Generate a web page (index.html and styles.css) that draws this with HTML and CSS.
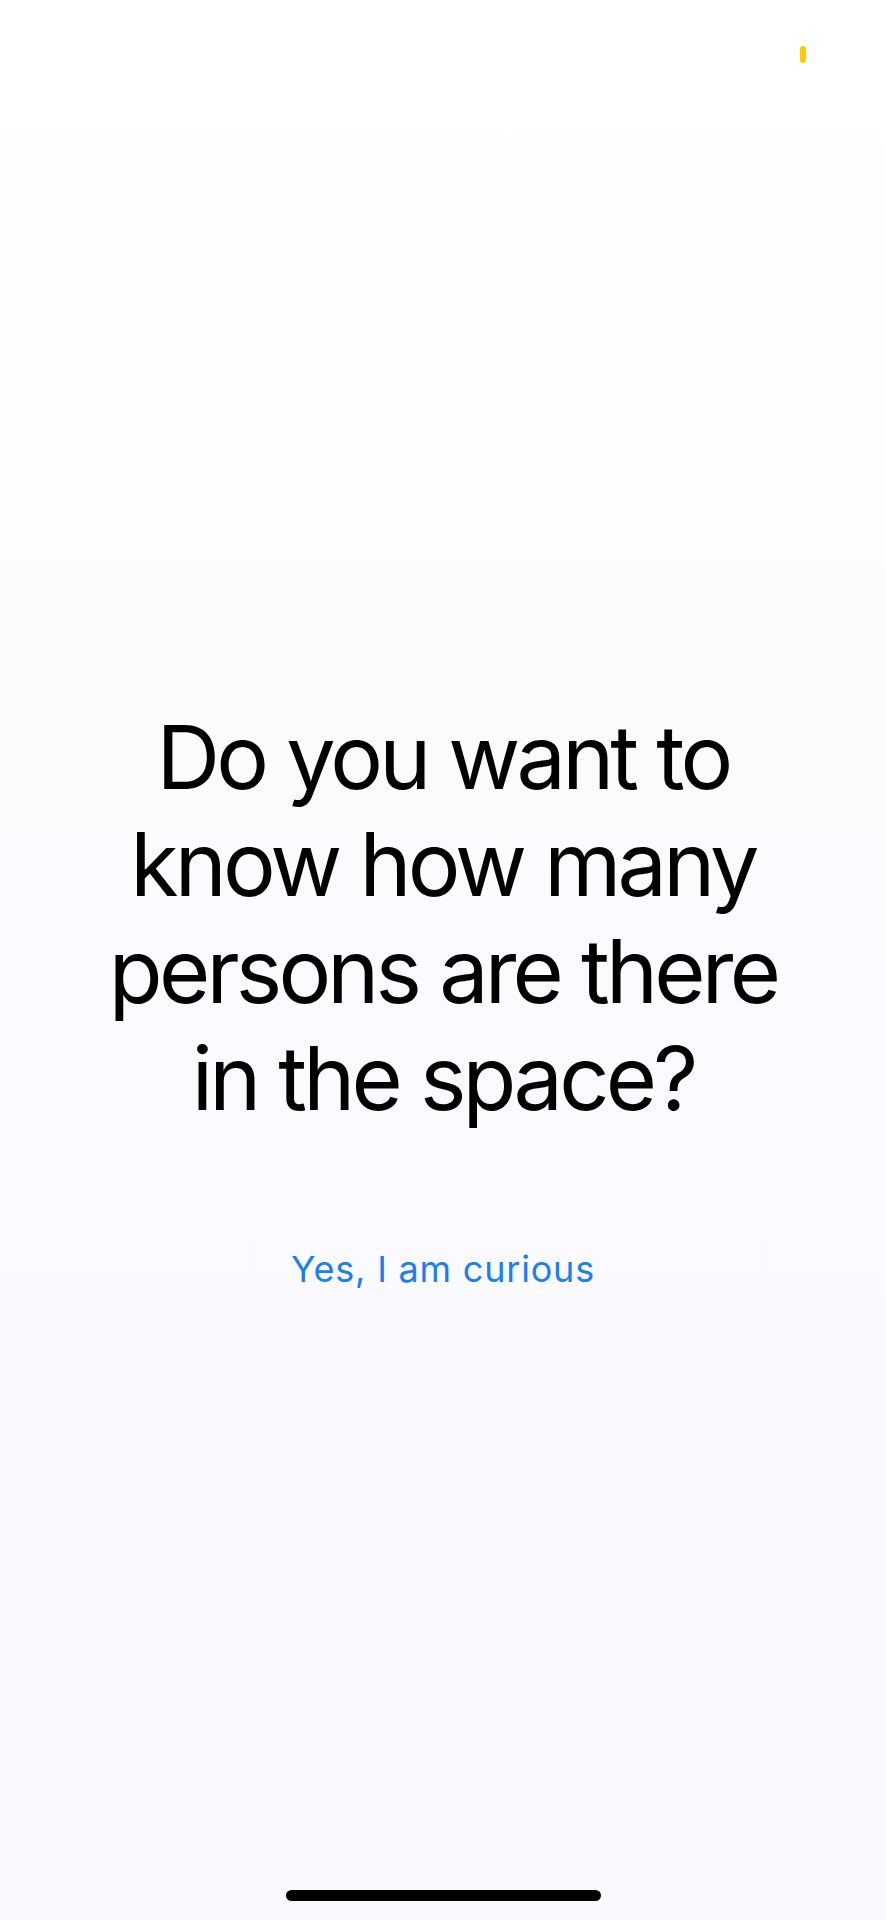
FILE: index.html
```html
<!DOCTYPE html>
<html lang="en">
<head>
<meta charset="utf-8">
<title>Curious</title>
<link rel="stylesheet" href="styles.css">
</head>
<body>
<div class="screen">
  <div class="status-bar">
    <span class="privacy-dot"></span>
  </div>
  <main class="content">
    <h1 class="question">Do you want to<br>know how many<br>persons are there<br>in the space?</h1>
    <a class="answer" href="#">Yes, I am curious</a>
  </main>
  <div class="home-bar">
    <span class="home-indicator"></span>
  </div>
</div>
</body>
</html>
```

FILE: styles.css
```css
html, body {
  margin: 0;
  padding: 0;
}
body {
  background: #fcfcff;
  font-family: Inter, "Noto Sans", sans-serif;
}
.screen {
  width: 886px;
  height: 1920px;
  display: flex;
  flex-direction: column;
  background: linear-gradient(#ffffff, #fbfbfe 40%, #fafafe);
}
.status-bar {
  display: flex;
  justify-content: flex-end;
  padding: 46px 80px 0 0;
  height: 100px;
  box-sizing: border-box;
}
.privacy-dot {
  width: 6px;
  height: 17px;
  border-radius: 3px;
  background: #ffcc00;
}
.content {
  display: flex;
  flex-direction: column;
  align-items: center;
  padding-top: 604px;
}
.question {
  margin: 0;
  font-size: 88px;
  line-height: 107px;
  font-weight: 400;
  color: #000;
  text-align: center;
  letter-spacing: -3.8px;
}
.answer {
  margin-top: 116px;
  font-size: 36px;
  line-height: 42px;
  color: #1a7ff2;
  text-decoration: none;
  letter-spacing: 0.8px;
}
.home-bar {
  margin-top: auto;
  display: flex;
  justify-content: center;
  padding-bottom: 19px;
}
.home-indicator {
  width: 315px;
  height: 11px;
  border-radius: 6px;
  background: #000;
}
```
